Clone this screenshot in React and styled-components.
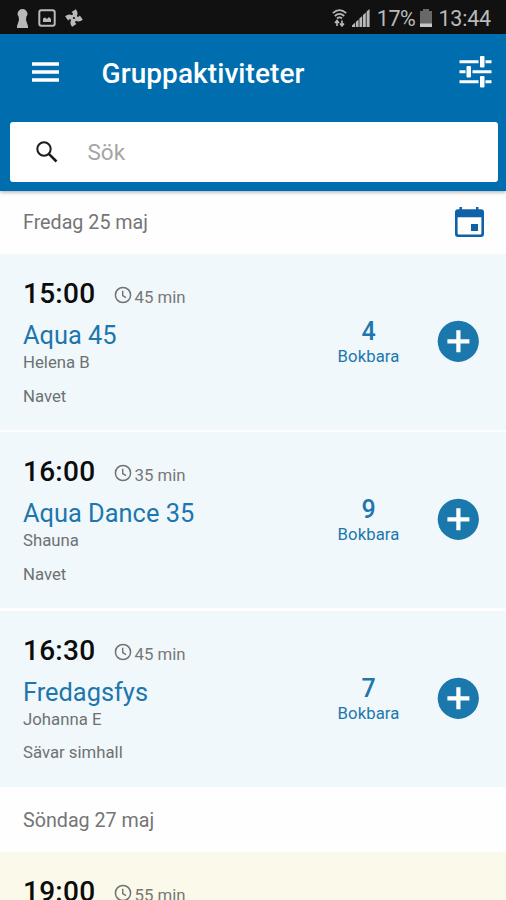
import React from 'react';
import styled, { createGlobalStyle } from 'styled-components';

const GlobalStyle = createGlobalStyle`
  * { box-sizing: border-box; }
  body { margin: 0; overflow: hidden; background: #fefefe; font-family: Roboto, sans-serif; }
  button { border: 0; padding: 0; background: none; display: block; }
  svg { display: block; flex: none; }
`;

const Screen = styled.main`
  width: 506px;
  height: 900px;
  overflow: hidden;
  background: #fefefe;
`;

const StatusBar = styled.div`
  height: 34px;
  padding: 2px 15px 0 16px;
  display: flex;
  align-items: center;
  justify-content: space-between;
  background: #111;
  color: #bababa;
`;

const StatusGroup = styled.div`
  display: flex;
  align-items: center;
  gap: ${(p) => p.$gap}px;
`;

const StatusText = styled.span`
  font-size: 21.5px;
  line-height: 30px;
  padding-top: 1px;
  letter-spacing: ${(p) => p.$spacing || 0}px;
  margin-left: ${(p) => p.$left || 0}px;
`;

const Header = styled.header`
  position: relative;
  height: 157px;
  padding: 0 8.5px 0 10px;
  background: #006eae;
  box-shadow: 0 1px 4px rgba(0, 0, 0, 0.35);
`;

const Toolbar = styled.div`
  height: 88px;
  display: flex;
  align-items: center;
  padding: 0 5.5px 13px 22px;
`;

const Title = styled.h1`
  flex: 1;
  margin: 4px 0 0 42.5px;
  color: #fff;
  font-size: 28px;
  line-height: 36px;
  font-weight: 500;
  letter-spacing: 0.08px;
`;

const SearchBox = styled.div`
  height: 60px;
  padding-left: 26px;
  display: flex;
  align-items: center;
  gap: 29.5px;
  border-radius: 3px;
  background: #fff;
`;

const SearchLabel = styled.span`
  padding-bottom: 1px;
  color: #a5a5a5;
  font-size: 22.5px;
  line-height: 30px;
`;

const DateRow = styled.div`
  height: ${(p) => p.$height}px;
  padding: 0 21px 0 23px;
  display: flex;
  align-items: center;
  justify-content: space-between;
`;

const DateLabel = styled.h2`
  margin: 0;
  padding-top: ${(p) => p.$shift || 0}px;
  color: #757575;
  font-size: 19.7px;
  line-height: 26px;
  font-weight: 400;
`;

const Card = styled.article`
  height: 175.6px;
  margin-bottom: ${(p) => (p.$last ? 0 : 2.9)}px;
  padding: 23px 27px 0 23px;
  display: flex;
  background: ${(p) => (p.$tone === 'cream' ? '#fbf9e9' : '#f0f8fb')};
`;

const Details = styled.div`
  flex: 1;
`;

const TimeRow = styled.div`
  display: flex;
  height: 34px;
`;

const Time = styled.span`
  width: 90.5px;
  color: #0c0c0c;
  font-size: 28px;
  line-height: 34px;
  font-weight: 500;
  letter-spacing: 0.25px;
`;

const Duration = styled.span`
  display: flex;
  gap: 3px;
  padding-top: 9px;
  color: #777;
  font-size: 16.8px;
  line-height: 22px;
`;

const ActivityName = styled.h3`
  margin: 8px 0 1px;
  color: #1d76ad;
  font-size: 25.4px;
  line-height: 32px;
  font-weight: 400;
`;

const Meta = styled.div`
  margin-bottom: 13.5px;
  color: #6e7173;
  font-size: 16.75px;
  line-height: 20px;
`;

const Availability = styled.div`
  width: 70px;
  margin-right: 33.5px;
  padding-top: 40px;
  text-align: center;
  color: #1d76ad;
`;

const Spots = styled.div`
  font-size: 25px;
  line-height: 30px;
  font-weight: 500;
`;

const SpotsLabel = styled.div`
  font-size: 16.7px;
  line-height: 20px;
  letter-spacing: 0.1px;
`;

const AddButton = styled.button`
  width: 42px;
  height: 42px;
  margin-top: 43px;
`;

const PawnIcon = () => (
  <svg width="13" height="19" viewBox="0 0 13 19" fill="#b9b9b9">
    <path d="M6.5 0a5 5 0 0 1 5 4.8q0 1.7-1.1 2.7l-.4 3.5 2 6v2H1v-2l2-6-.4-3.5Q1.5 6.5 1.5 4.8A5 5 0 0 1 6.5 0Z" />
  </svg>
);

const ImageIcon = () => (
  <svg width="18" height="18" viewBox="0 0 18 18">
    <rect x="1.3" y="1.3" width="15.4" height="15.4" rx="2" fill="none" stroke="#b9b9b9" strokeWidth="2" />
    <path d="M5 13V9.5l2-1 2 1.5 2-2 2 2V13Z" fill="#b9b9b9" />
  </svg>
);

const PinwheelIcon = () => (
  <svg width="18" height="18" viewBox="-9 -9 18 18" fill="#b9b9b9">
    <g transform="rotate(8)">
      {[0, 90, 180, 270].map((angle) => (
        <path key={angle} transform={`rotate(${angle})`} d="M-1 1.5 2.5-2Q4-6 .5-9L-3.2-5.500-1.500-4-3-.5Z" />
      ))}
    </g>
    <circle r="1.1" fill="#111" />
  </svg>
);

const WifiIcon = () => (
  <svg width="15" height="18" viewBox="0 0 15 18" fill="none" stroke="#b9b9b9" strokeWidth="1.7">
    <path d="M.8 4.2q6.7-6 13.4 0M2.8 7q4.7-4.3 9.4 0M5 9.5q2.5-2.2 5 0" />
    <path d="M5 17v-5M3 14l2-2.4L7 14M10 11.5v5M8 14.5l2 2.4 2-2.4" strokeWidth="1.6" />
  </svg>
);

const SignalIcon = () => (
  <svg width="18" height="18" viewBox="0 0 18 18" fill="#b9b9b9">
    <path d="M0 18v-1.5l3-2.7V18ZM3.8 18v-5l2.8-2.5V18ZM7.4 18V9.5L10.2 7v11ZM11 18V6l2.8-2.5V18ZM14.6 18V2.6L17.6 0v18Z" />
  </svg>
);

const BatteryIcon = () => (
  <svg width="12" height="18" viewBox="0 0 12 18">
    <path d="M3 0h6v2h3v16H0V2h3Z" fill="#686868" />
    <path d="M0 14.5h12V18H0Z" fill="#c8c8c8" />
  </svg>
);

const MenuIcon = () => (
  <svg width="27" height="20" viewBox="0 0 27 20" fill="#fff">
    <path d="M0 .2h27v3.5H0ZM0 8.2h27v3.5H0ZM0 16.2h27v3.5H0Z" />
  </svg>
);

const TuneIcon = () => (
  <svg width="33" height="32" viewBox="0 0 33 32" fill="#fff">
    <path d="M.5 4.3h19v2.9h-19ZM26.5 4.3h6v2.9h-6ZM.5 14.3h6v2.9h-6ZM13.5 14.3h19v2.9h-19ZM.5 24.3h19v2.9h-19ZM26.5 24.3h6v2.9h-6Z" />
    <rect x="21" y="0" width="4.5" height="11.5" rx="1" />
    <rect x="7.5" y="10" width="4.5" height="11.5" rx="1" />
    <rect x="21" y="20" width="4.5" height="11.5" rx="1" />
  </svg>
);

const SearchIcon = () => (
  <svg width="22" height="22" viewBox="0 0 22 22" fill="none" stroke="#1b1b1b">
    <circle cx="8" cy="8" r="6.7" strokeWidth="2" />
    <path d="m12.8 12.8 7.7 7.7" strokeWidth="2.6" />
  </svg>
);

const CalendarIcon = () => (
  <svg width="31" height="31" viewBox="0 0 31 31" fill="#0f62a8">
    <path fillRule="evenodd" d="M5.5 0H8v2.3h14V0h2.5v2.3H27q3 0 3 3V27q0 3-3 3H4q-3 0-3-3V5.3q0-3 3-3h1.5ZM3.6 10.2v16q0 1.2 1.2 1.2h21.4q1.2 0 1.2-1.2v-16Z" />
    <path d="M17 17h7v7h-7Z" />
  </svg>
);

const ClockIcon = () => (
  <svg width="18" height="18" viewBox="0 0 18 18" fill="none" stroke="#707274" strokeWidth="1.5">
    <circle cx="9" cy="9" r="7.6" />
    <path d="M8.7 4.8v4.7l3.3 2.1" strokeWidth="1.4" />
  </svg>
);

const PlusIcon = () => (
  <svg width="42" height="42" viewBox="0 0 42 42">
    <circle cx="21.3" cy="21.3" r="20.6" fill="#1a78ad" />
    <path d="M10.4 21.3h22M21.4 10.3v22" stroke="#fff" strokeWidth="4.2" />
  </svg>
);

const friday = [
  { time: '15:00', minutes: 45, name: 'Aqua 45', leader: 'Helena B', place: 'Navet', spots: 4 },
  { time: '16:00', minutes: 35, name: 'Aqua Dance 35', leader: 'Shauna', place: 'Navet', spots: 9 },
  { time: '16:30', minutes: 45, name: 'Fredagsfys', leader: 'Johanna E', place: 'Sävar simhall', spots: 7 },
];

function StartTime({ time, minutes }) {
  return (
    <TimeRow>
      <Time>{time}</Time>
      <Duration><ClockIcon /><span>{minutes} min</span></Duration>
    </TimeRow>
  );
}

function Activity({ item, last }) {
  return (
    <Card $last={last}>
      <Details>
        <StartTime time={item.time} minutes={item.minutes} />
        <ActivityName>{item.name}</ActivityName>
        <Meta>{item.leader}</Meta>
        <Meta>{item.place}</Meta>
      </Details>
      <Availability>
        <Spots>{item.spots}</Spots>
        <SpotsLabel>Bokbara</SpotsLabel>
      </Availability>
      <AddButton aria-label="Boka"><PlusIcon /></AddButton>
    </Card>
  );
}

export default function App() {
  return (
    <Screen>
      <GlobalStyle />
      <StatusBar>
        <StatusGroup $gap={9}><PawnIcon /><ImageIcon /><PinwheelIcon /></StatusGroup>
        <StatusGroup $gap={5}>
          <WifiIcon /><SignalIcon />
          <StatusText $left={2} $spacing={-0.4}>17%</StatusText>
          <BatteryIcon />
          <StatusText $left={1} $spacing={-0.2}>13:44</StatusText>
        </StatusGroup>
      </StatusBar>
      <Header>
        <Toolbar>
          <button aria-label="Meny"><MenuIcon /></button>
          <Title>Gruppaktiviteter</Title>
          <button aria-label="Filter"><TuneIcon /></button>
        </Toolbar>
        <SearchBox><SearchIcon /><SearchLabel>Sök</SearchLabel></SearchBox>
      </Header>
      <DateRow $height={63}>
        <DateLabel>Fredag 25 maj</DateLabel>
        <button aria-label="Kalender"><CalendarIcon /></button>
      </DateRow>
      {friday.map((item, i) => (
        <Activity key={item.time} item={item} last={i === friday.length - 1} />
      ))}
      <DateRow $height={65.4}>
        <DateLabel $shift={4}>Söndag 27 maj</DateLabel>
      </DateRow>
      <Card $tone="cream" $last>
        <StartTime time="19:00" minutes={55} />
      </Card>
    </Screen>
  );
}
